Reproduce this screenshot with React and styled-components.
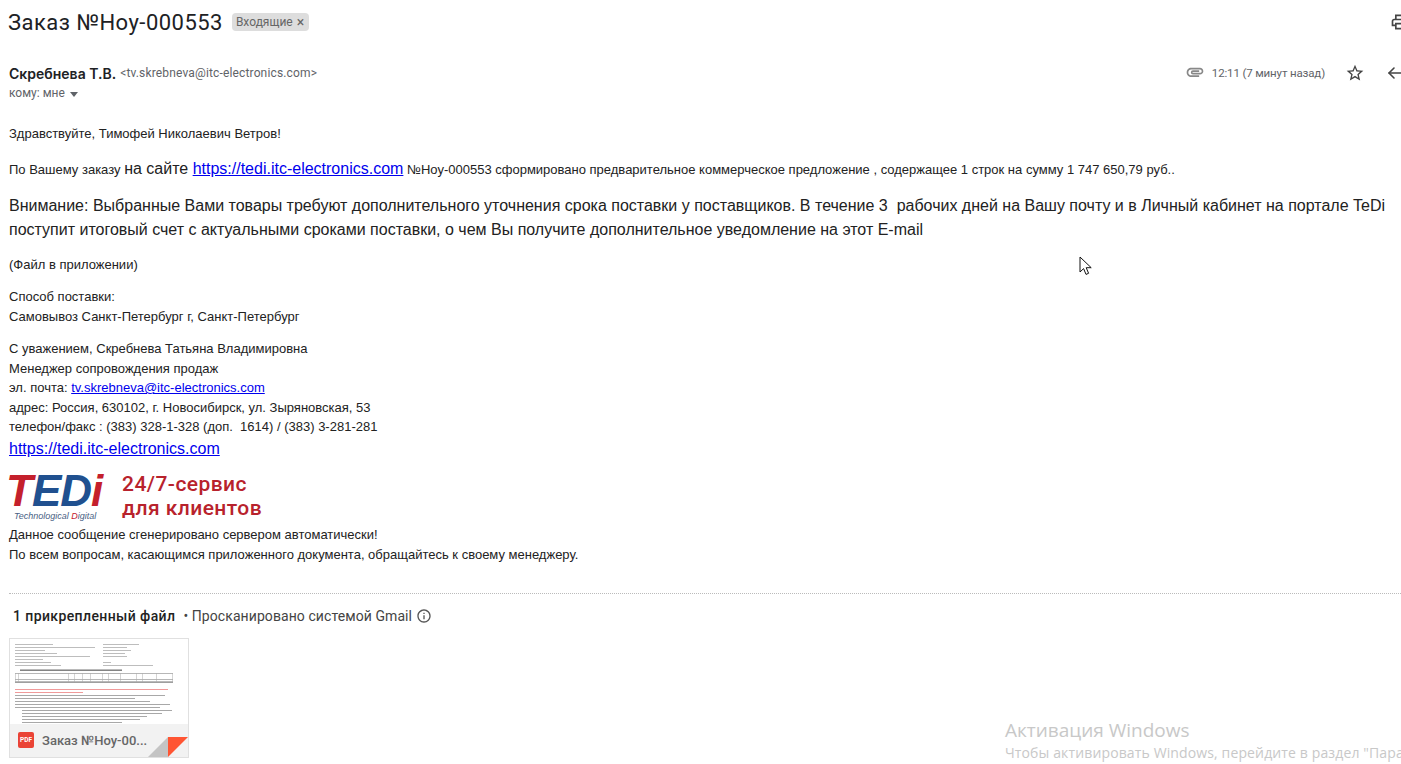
import React from 'react'
import styled, { createGlobalStyle } from 'styled-components'
import { MdOutlinePrint, MdStarBorder, MdAttachment, MdInfoOutline } from 'react-icons/md'
import { Reply } from 'lucide-react'

const Global = createGlobalStyle`
  html, body { margin: 0; padding: 0; background: #fff; }
  body { width: 1401px; height: 764px; overflow: hidden; }
`

const Page = styled.div`
  position: relative;
  width: 1401px;
  height: 764px;
  overflow: hidden;
  font-family: Roboto, "Liberation Sans", sans-serif;
  color: #222;
`

const SubjectRow = styled.div`
  display: flex;
  align-items: center;
  height: 44px;
  padding-left: 8px;
`

const Subject = styled.h2`
  margin: 0;
  font-size: 22px;
  font-weight: 400;
  letter-spacing: 0.47px;
  color: #202124;
  white-space: nowrap;
`

const LabelChip = styled.span`
  display: inline-flex;
  align-items: center;
  gap: 4px;
  height: 18px;
  margin-left: 9px;
  padding: 0 5px 0 4px;
  border-radius: 4px;
  background: #ddd;
  color: #666;
  font-size: 12px;
  b { font-weight: 400; font-size: 14px; color: #666; }
`

const PrintButton = styled.span`
  margin-left: auto;
  margin-right: -9px;
  display: flex;
  color: #444;
  font-size: 20px;
`

const SenderBlock = styled.div`
  margin-top: 19px;
  padding-left: 9px;
`

const SenderRow = styled.div`
  display: flex;
  align-items: center;
  height: 20px;
`

const SenderName = styled.span`
  font-family: Inter, Roboto, sans-serif;
  font-size: 14px;
  font-weight: 600;
  color: #202124;
`

const SenderMail = styled.span`
  margin-left: 4px;
  font-size: 12px;
  letter-spacing: 0.15px;
  color: #5f6368;
`

const Meta = styled.div`
  margin-left: auto;
  display: flex;
  align-items: center;
  margin-right: -8px;
  color: #5f6368;
  font-size: 11.5px;
  letter-spacing: -0.15px;
`

const Clip = styled.span`
  display: flex;
  margin-bottom: 3px;
  margin-right: 7px;
  font-size: 20px;
  color: #888;
`

const StarIcon = styled.span`
  display: flex;
  font-size: 20px;
  color: #444;
  margin-left: 20px;
`

const ReplyIcon = styled.span`
  display: flex;
  color: #444;
  margin-left: 20px;
`

const ToRow = styled.div`
  display: flex;
  align-items: center;
  height: 20px;
  font-size: 12px;
  color: #5f6368;
`

const Caret = styled.i`
  margin-left: 5px;
  margin-top: 2px;
  border: 4px solid transparent;
  border-top: 5px solid #5f6368;
  border-bottom: 0;
`

const Body = styled.div`
  padding-left: 9px;
  margin-top: 21px;
  font-family: "Liberation Sans", Arial, sans-serif;
  font-size: 13px;
  color: #222;
  white-space: nowrap;
  a { color: #00e; }
`

const Para = styled.div`
  margin-top: ${p => p.$top || 0}px;
  line-height: ${p => p.$line || 20}px;
  font-size: ${p => p.$size || 13}px;
`

const Big = styled.span`
  font-size: 16px;
`

const LogoRow = styled.div`
  display: flex;
  align-items: flex-start;
  height: 52px;
  margin-top: 12px;
`

const LogoMark = styled.div`
  width: 113px;
  display: flex;
  flex-direction: column;
`

const LogoWord = styled.div`
  margin-left: -3px;
  font-family: "Liberation Sans", sans-serif;
  font-size: 44px;
  line-height: 36px;
  height: 36px;
  font-weight: 700;
  font-style: italic;
  letter-spacing: -1px;
  color: #c4202c;
  span { color: #20508f; }
`

const LogoTag = styled.div`
  font-family: "Liberation Sans", sans-serif;
  font-size: 9px;
  font-style: italic;
  line-height: 15px;
  margin-left: 5px;
  color: #4a5f85;
  span { color: #c4202c; }
`

const Slogan = styled.div`
  font-family: Roboto, sans-serif;
  font-size: 21px;
  font-weight: 500;
  line-height: 24px;
  letter-spacing: 0.45px;
  color: #b8222c;
  margin-top: -1px;
`

const Divider = styled.div`
  margin: 28px 0 0 9px;
  border-top: 1px dotted #bbb;
`

const AttachHead = styled.div`
  display: flex;
  align-items: center;
  height: 45px;
  padding-left: 13px;
  font-size: 14px;
  letter-spacing: 0.08px;
  color: #444;
  strong { font-weight: 500; letter-spacing: 0.4px; color: #222; margin-right: 8px; }
  svg { margin-left: 4px; font-size: 16px; color: #555; }
`

const Card = styled.div`
  position: relative;
  width: 178px;
  height: 118px;
  margin-left: 9px;
  margin-top: -1px;
  border: 1px solid #e0e0e0;
  overflow: hidden;
`

const Thumb = styled.svg`
  display: block;
  width: 178px;
  height: 85px;
`

const CardFoot = styled.div`
  display: flex;
  align-items: center;
  height: 33px;
  padding-left: 8px;
  background: #f2f2f2;
`

const PdfBadge = styled.span`
  display: flex;
  align-items: center;
  justify-content: center;
  width: 16px;
  height: 16px;
  border-radius: 2px;
  background: #ea4335;
  color: #fff;
  font-size: 6.5px;
  font-weight: 700;
`

const CardName = styled.span`
  margin-left: 8px;
  font-size: 13px;
  font-weight: 500;
  color: #666;
  white-space: nowrap;
`

const Fold = styled.svg`
  position: absolute;
  right: 0;
  bottom: 0;
  width: 40px;
  height: 20px;
`

const Watermark = styled.div`
  position: absolute;
  left: 1005px;
  top: 718px;
  font-family: "Open Sans", sans-serif;
  color: #c8c8c8;
  white-space: nowrap;
`

const WmTitle = styled.div`
  font-size: 19px;
  line-height: 24px;
`

const WmText = styled.div`
  font-size: 14px;
  line-height: 22px;
  letter-spacing: 0.13px;
`

const Cursor = styled.svg`
  position: absolute;
  left: 1079px;
  top: 256px;
  width: 13px;
  height: 20px;
`

const headLines = [
  [5, 5, 38], [5, 8, 80], [5, 11, 30], [5, 14, 42], [5, 17, 75], [5, 20, 28], [5, 23, 36], [5, 26, 46],
  [93, 5, 36], [93, 8, 24], [93, 11, 28], [93, 14, 22], [93, 17, 24], [93, 23, 8], [93, 26, 50],
]

const bodyLines = [
  [5, 56, 150], [5, 59, 120], [5, 62, 135], [5, 65, 155], [5, 68, 145], [12, 71, 150],
  [12, 74, 140], [12, 77, 125], [12, 80, 118], [12, 83, 100],
]

function DocThumb() {
  return (
    <Thumb viewBox="0 0 178 85">
      <rect width="178" height="85" fill="#fff" />
      {headLines.map(([x, y, w], i) => (
        <rect key={i} x={x} y={y} width={w} height="1" fill="#bdbdbd" />
      ))}
      <rect x="10" y="30.5" width="102" height="1.4" fill="#777" />
      <rect x="5" y="34" width="158" height=".6" fill="#888" />
      <rect x="5" y="40" width="158" height=".6" fill="#888" />
      <rect x="5" y="42.5" width="158" height="1.2" fill="#777" />
      {[5, 8, 58, 64, 72, 80, 92, 98, 110, 126, 132, 146, 162].map(x => (
        <rect key={x} x={x} y="34" width=".5" height="9" fill="#aaa" />
      ))}
      <rect x="5" y="50" width="153" height="1" fill="#f09a9a" />
      <rect x="5" y="53" width="68" height="1" fill="#f09a9a" />
      {bodyLines.map(([x, y, w], i) => (
        <rect key={i} x={x} y={y} width={w} height="1" fill="#a8a8a8" />
      ))}
    </Thumb>
  )
}

export default function App() {
  return (
    <Page>
      <Global />
      <SubjectRow>
        <Subject>Заказ №Ноу-000553</Subject>
        <LabelChip>Входящие <b>×</b></LabelChip>
        <PrintButton><MdOutlinePrint /></PrintButton>
      </SubjectRow>

      <SenderBlock>
        <SenderRow>
          <SenderName>Скребнева Т.В.</SenderName>
          <SenderMail>&lt;tv.skrebneva@itc-electronics.com&gt;</SenderMail>
          <Meta>
            <Clip><MdAttachment /></Clip>
            12:11 (7 минут назад)
            <StarIcon><MdStarBorder /></StarIcon>
            <ReplyIcon><Reply size={24} strokeWidth={1.6} /></ReplyIcon>
          </Meta>
        </SenderRow>
        <ToRow>кому: мне<Caret /></ToRow>
      </SenderBlock>

      <Body>
        <Para>Здравствуйте, Тимофей Николаевич Ветров!</Para>
        <Para $top={15}>
          По Вашему заказу <Big>на сайте <a href="#">https://tedi.itc-electronics.com</a></Big> №Ноу-000553 сформировано предварительное коммерческое предложение , содержащее 1 строк на сумму 1 747 650,79 руб..
        </Para>
        <Para $top={14} $line={24} $size={16}>
          Внимание: Выбранные Вами товары требуют дополнительного уточнения срока поставки у поставщиков. В течение 3&nbsp; рабочих дней на Вашу почту и в Личный кабинет на портале TeDi
          <br />
          поступит итоговый счет с актуальными сроками поставки, о чем Вы получите дополнительное уведомление на этот E-mail
        </Para>
        <Para $top={13}>(Файл в приложении)</Para>
        <Para $top={12}>Способ поставки:<br />Самовывоз Санкт-Петербург г, Санкт-Петербург</Para>
        <Para $top={12} $line={19.6}>
          С уважением, Скребнева Татьяна Владимировна<br />
          Менеджер сопровождения продаж<br />
          эл. почта: <a href="#">tv.skrebneva@itc-electronics.com</a><br />
          адрес: Россия, 630102, г. Новосибирск, ул. Зыряновская, 53<br />
          телефон/факс : (383) 328-1-328 (доп.&nbsp; 1614) / (383) 3-281-281
        </Para>
        <Para $line={24} $size={16}><a href="#">https://tedi.itc-electronics.com</a></Para>
        <LogoRow>
          <LogoMark>
            <LogoWord>T<span>ED</span>i</LogoWord>
            <LogoTag>Technological <span>D</span>igital</LogoTag>
          </LogoMark>
          <Slogan>24/7-сервис<br />для клиентов</Slogan>
        </LogoRow>
        <Para>Данное сообщение сгенерировано сервером автоматически!<br />По всем вопросам, касающимся приложенного документа, обращайтесь к своему менеджеру.</Para>
      </Body>

      <Divider />
      <AttachHead>
        <strong>1 прикрепленный файл</strong>• Просканировано системой Gmail <MdInfoOutline />
      </AttachHead>
      <Card>
        <DocThumb />
        <CardFoot>
          <PdfBadge>PDF</PdfBadge>
          <CardName>Заказ №Ноу-00...</CardName>
        </CardFoot>
        <Fold viewBox="0 0 40 20">
          <polygon points="0,20 20,0 20,20" fill="#c4c4c4" />
          <polygon points="20,0 40,0 20,20" fill="#ff5533" />
        </Fold>
      </Card>

      <Watermark>
        <WmTitle>Активация Windows</WmTitle>
        <WmText>Чтобы активировать Windows, перейдите в раздел "Параметры"</WmText>
      </Watermark>

      <Cursor viewBox="0 0 13 20">
        <path d="M1 1v15l3.6-3.4 2.4 5.8 2.6-1.1-2.4-5.6h5z" fill="#fff" stroke="#111" strokeWidth="1" />
      </Cursor>
    </Page>
  )
}
